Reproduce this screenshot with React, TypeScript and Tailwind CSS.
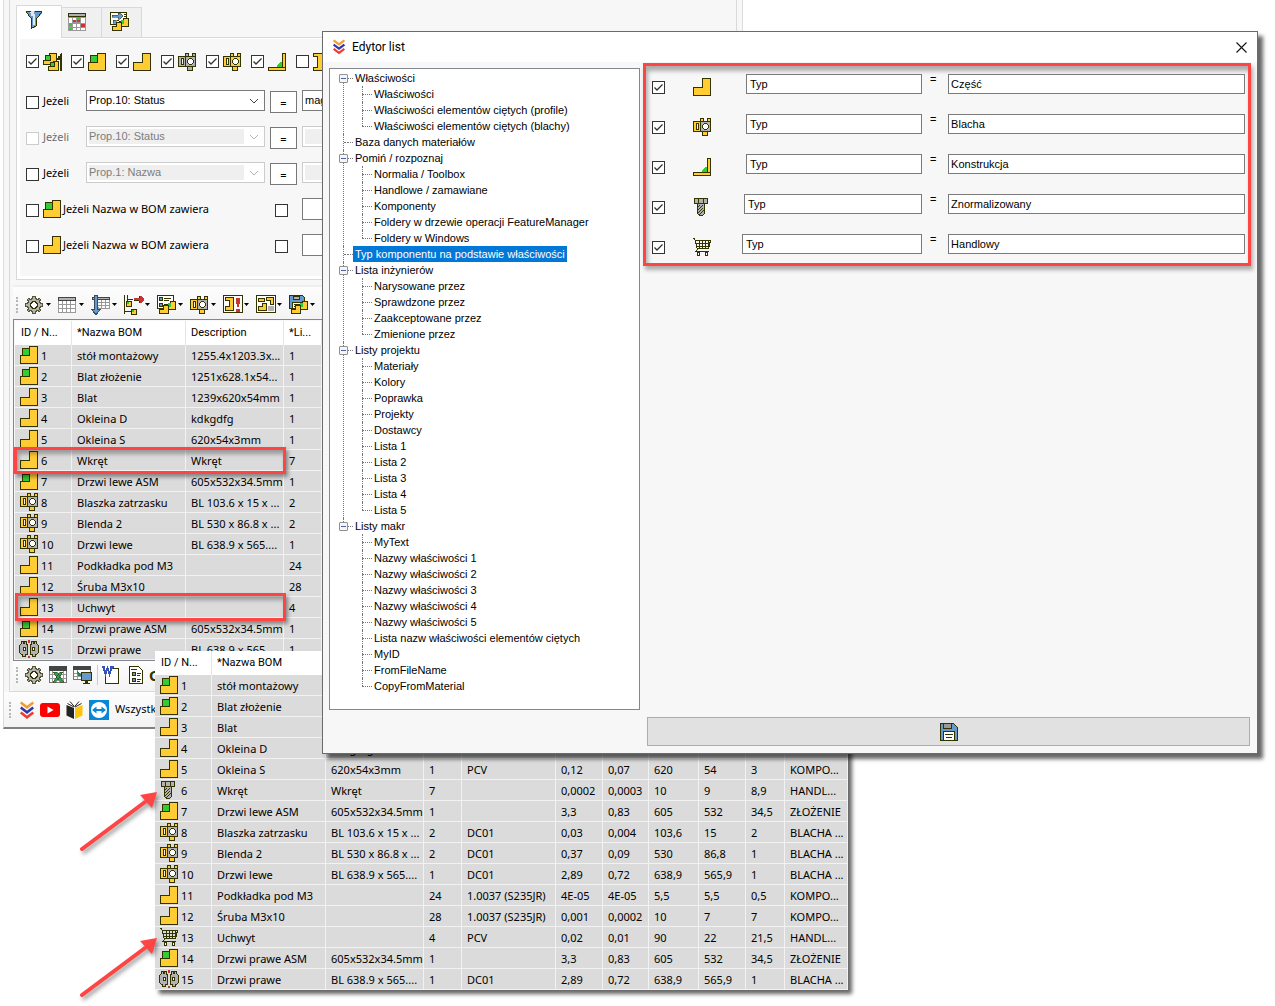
import React, { useState } from "react";

const Y = "#ffcc33";
const K = "#333300";
const G = "#33cc33";
const A = "#b2b2b2";
const B = "#6699cc";
const R = "#cc3333";

type IconProps = { children: React.ReactNode; w?: number; h?: number; smooth?: boolean };

function Icon({ children, w = 18, h = 18, smooth = false }: IconProps) {
  return (
    <svg
      width={w}
      height={h}
      viewBox={`0 0 ${w} ${h}`}
      shapeRendering={smooth ? "auto" : "crispEdges"}
      className="block shrink-0"
      fill="none"
      aria-hidden="true"
    >
      {children}
    </svg>
  );
}

const PartIcon = () => (
  <Icon>
    <path d="M9.5 .5H17.5V17.5H.5V9.5H9.5Z" fill={Y} stroke={K} />
  </Icon>
);

const AssemblyIcon = () => (
  <Icon>
    <path d="M9.5 .5H17.5V17.5H.5V9.5H9.5Z" fill={Y} stroke={K} />
    <path d="M2.5 2.5H9.5V9.5H2.5Z" fill={G} stroke={K} />
  </Icon>
);

function SheetIcon({ left = Y, plate = A, tabs = Y }: { left?: string; plate?: string; tabs?: string }) {
  return (
    <Icon>
      <path d="M7.5 .5H10.5V4.5H7.5ZM14.5 .5H17.5V4.5H14.5ZM9.5 12.5H14.5V17.5H9.5Z" fill={tabs} stroke={K} />
      <path d="M.5 3.5H7.5V13.5H.5Z" fill={left} stroke={K} />
      <path d="M3.5 5.5H5.5V11.5H3.5Z" fill="#f2f2f2" stroke={K} />
      <path d="M7.5 3.5H17.5V13.5H7.5Z" fill={plate} stroke={K} />
      <path d="M11.5 5.5H13.5L15.5 7.5V9.5L13.5 11.5H11.5L9.5 9.5V7.5Z" fill="#fff" stroke={K} />
    </Icon>
  );
}

const BracketIcon = () => (
  <Icon>
    <path d="M8.5 14.5V12.5L12.5 8.5H14.5V14.5Z" fill={G} />
    <path d="M14.5 .5H17.5V14.5H14.5Z" fill={Y} stroke={K} />
    <path d="M.5 14.5H17.5V17.5H.5Z" fill={Y} stroke={K} />
  </Icon>
);

const BeamIcon = () => (
  <Icon>
    <path d="M.5 .5H13.5V3.5H9.5V14.5H13.5V17.5H.5V14.5H4.5V3.5H.5Z" fill={Y} stroke={K} />
  </Icon>
);

const SectionIcon = () => (
  <Icon w={20}>
    <path d="M6.5 .5H13.5V11.5H.5V7.5H6.5Z" fill={Y} stroke={K} />
    <path d="M2.5 2.5H7.5V7.5H2.5Z" fill={G} stroke={K} />
    <path d="M10.5 8.5H15.5V17.5H5.5V13.5H10.5Z" fill={Y} stroke={K} />
    <path d="M7.5 9.5H11.5V13.5H7.5Z" fill={G} stroke={K} />
    <path d="M19 0V18H17V7H13V5H15V3H17V1H18V0Z" fill={K} />
  </Icon>
);

const BoltIcon = () => (
  <Icon>
    <path d="M4.5 5.5H11.5V15.5L9.5 17.5H6.5L4.5 15.5Z" fill={A} stroke={K} />
    <path d="M1.5 .5H14.5V5.5H1.5Z" fill={A} stroke={K} />
    <path d="M5.5 1V5M10.5 1V5" stroke={K} />
    <path d="M5 9L7 7M5 12L10 7M5 15L10 10M6 17L11 12" stroke={K} />
  </Icon>
);

const CartIcon = () => (
  <Icon>
    <path d="M0 .5H1.5L4.5 11.5L2.5 13.5H15.5M2 2.5H17.5L15.5 10.5H4" stroke={K} />
    <path d="M3 5.5H17M3 8.5H16M6.5 3V10M9.5 3V10M12.5 3V10M15.5 3V8" stroke={K} />
    <path d="M4.5 14.5H6.5V17.5H4.5ZM12.5 14.5H14.5V17.5H12.5Z" fill="#fff" stroke={K} />
  </Icon>
);

const MirrorIcon = () => (
  <Icon w={20}>
    <path d="M9 0H11V3H9ZM9 16H11V18H9Z" fill={R} />
    <path d="M.5 5.5L2.5 3.5V1.5H4.5V3.5H5.5V1.5H7.5V4.5H8.5V14.5H6.5V16.5H3.5V14.5H2.5L.5 12.5Z" fill={A} stroke={K} />
    <path d="M19.5 5.5L17.5 3.5V1.5H15.5V3.5H14.5V1.5H12.5V4.5H11.5V14.5H13.5V16.5H16.5V14.5H17.5L19.5 12.5Z" fill={A} stroke={K} />
    <path d="M4.5 7.5H6.5V10.5H4.5ZM13.5 7.5H15.5V10.5H13.5Z" fill="#fff" stroke={K} />
  </Icon>
);

const FunnelIcon = () => (
  <Icon w={16}>
    <path d="M0 0H16V2L11 7V15H9V17H5V7L0 2Z" fill={B} />
    <path d="M4 0H8V3H9V14H7V5H5V2H4Z" fill="#dfeaf7" />
    <path d="M0 0h5v1H0zM0 1h1v1H0zM1 2h1v1H1zM2 3h1v2H2zM3 5h1v1H3zM4 6h1v1H4zM5 7h1v11H5zM9 0h7v1H9zM15 1h1v1h-1zM14 2h1v1h-1zM13 3h1v2h-1zM12 5h1v1h-1zM11 6h1v1h-1zM10 7h1v8h-1zM8 15h2v1H8zM6 16h2v1H6z" fill={K} />
  </Icon>
);

const CalendarIcon = () => (
  <Icon>
    <path d="M0 0H18V18H0Z" fill="#999" />
    <path d="M.5 .5H17.5V3.5H.5Z" fill={A} stroke={K} />
    <path d="M1 5h3v3H1zM5 5h3v3H5zM13 5h4v3h-4zM1 8h3v2H1zM13 8h4v2h-4zM5 11h3v3H5zM9 11h3v3H9zM5 15h3v2H5zM9 15h3v2H9zM13 15h4v2h-4z" fill="#fff" />
    <path d="M9 4h3v3H9zM1 10h3v3H1zM1 15h3v2H1z" fill={G} />
    <path d="M5 7h3v2H5zM9 7h3v2H9zM13 11h4v3h-4z" fill={R} />
  </Icon>
);

const SmallParts = () => (
  <g transform="translate(2 6)">
    <path d="M11.5 .5H16.5V8.5H7.5V3.5H11.5Z" fill={Y} stroke={K} />
    <path d="M8.5 1.5H11.5V5.5H8.5Z" fill={G} />
    <path d="M4.5 4.5H9.5V12.5H.5V8.5H4.5Z" fill={Y} stroke={K} />
  </g>
);

const TransferIcon = () => (
  <Icon w={20} h={19}>
    <path d="M.5 .5H16.5V12.5H.5Z" fill="#fff" stroke={K} />
    <path d="M2 3h6V1h2l3 3-3 3H8V5H2zM3 8h3v3H3z" fill={B} stroke={K} strokeWidth=".5" />
    <path d="M14 2.5H16M14 4.5H16M7 8.5H9" stroke={K} />
    <SmallParts />
  </Icon>
);

const GearIcon = () => (
  <Icon>
    <path
      d="M7.5 .5H10.5V2.5L12.5 3.5L14.5 2.5L15.5 3.5L14.5 5.5L15.5 7.5H17.5V10.5H15.5L14.5 12.5L15.5 14.5L14.5 15.5L12.5 14.5L10.5 15.5V17.5H7.5V15.5L5.5 14.5L3.5 15.5L2.5 14.5L3.5 12.5L2.5 10.5H.5V7.5H2.5L3.5 5.5L2.5 3.5L3.5 2.5L5.5 3.5L7.5 2.5Z"
      fill={A}
      stroke="#555533"
    />
    <path d="M8 5.500H10L12.500 8V10L10 12.500H8L5.500 10V8Z" fill="#fff" stroke={K} />
  </Icon>
);

const GridIcon = () => (
  <Icon>
    <path d="M.5 2.500H17.500V16.500H.5Z" fill="#fff" stroke="#999" />
    <path d="M1 8.500H17M1 12.500H17M4.500 5V16M8.500 5V16M12.500 5V16" stroke="#999" />
    <path d="M.5 1.500H17.500V4.500H.5Z" fill={A} stroke="#444" />
  </Icon>
);

const SortIcon = () => (
  <Icon w={19} h={20}>
    <path d="M1.500 2.500H18.500V13.500H8Z" fill="#fff" stroke="#999" />
    <path d="M7 7.500H18M7 10.500H18M10.500 5V13M14.500 5V13" stroke="#999" />
    <path d="M1.500 2.500H18.500V4.500H1.500Z" fill={A} stroke="#444" />
    <path d="M3.500 .5H6.500V14.500H9.500L5.500 19H4.500L.5 14.500H3.500Z" fill={B} stroke="#334d66" />
  </Icon>
);

const TreeMoveIcon = () => (
  <Icon w={20} h={20}>
    <path d="M.500 0V19M1 16.500H8M3.500 0V6M4 4.500H9" stroke={K} />
    <path d="M2.500 6.500H7.500V11.500H2.500Z" fill={Y} stroke={K} />
    <path d="M3 7h2v2H3z" fill={G} />
    <path d="M7.500 14.500H12.500V19.500H7.500Z" fill={Y} stroke={K} />
    <path d="M8 15h2v2H8z" fill={G} />
    <path d="M10 3h5V1h2l3 3v1l-3 3h-2V6h-5z" fill={R} />
    <path d="M10 5.500H15M15.500 1V3M15.500 6V8" stroke={K} />
  </Icon>
);

const ListPartsIcon = () => (
  <Icon w={20} h={19}>
    <path d="M.5 .5H16.500V13.500H.5Z" fill="#fff" stroke={K} />
    <path d="M2.500 2.500H5.500V5.500H2.500ZM2.500 8.500H5.500V11.500H2.500Z" fill={B} stroke={K} />
    <path d="M7 3.500H14M7 5.500H12M7 9.500H9" stroke={K} />
    <SmallParts />
  </Icon>
);

const FrameAlertIcon = () => (
  <Icon w={20} h={19}>
    <path d="M.5 .5H19.500V17.500H.5Z" fill="#fff" stroke={K} />
    <path d="M2.500 2.500H10.500V15.500H2.500V11.500H6.500V5.500H2.500Z" fill={Y} stroke={K} />
    <path d="M13 3h4v6h-1v3h-2V9h-1zM13 14h4v3h-4z" fill={R} />
  </Icon>
);

const FramePartsIcon = () => (
  <Icon w={20} h={19}>
    <path d="M.5 .5H19.500V17.500H.5Z" fill="#fff" stroke={K} />
    <path d="M2.500 3.500H8.500V6.500H2.500ZM6.500 8.500H10.500V15.500H2.500V11.500H6.500Z" fill={Y} stroke={K} />
    <path d="M10.500 2.500H17.500V9.500H14.500V5.500H10.500Z" fill={Y} stroke={K} />
    <path d="M12 11h6v5h-6z" fill={A} />
  </Icon>
);

const DiskPartsIcon = () => (
  <Icon w={20} h={19}>
    <path d="M.5 .5H13.500L15.500 2.500V13.500H.5Z" fill={B} stroke={K} />
    <path d="M4.500 1H10.500V4.500H4.500Z" fill={A} stroke={K} />
    <path d="M3.500 7.500H12.500V13.500H3.500Z" fill="#fff" stroke={K} />
    <path d="M5 9.500H9M5 11.500H8" stroke={K} />
    <SmallParts />
  </Icon>
);

const ExcelIcon = () => (
  <Icon>
    <path d="M.5 .5H17.500V16.500H.5Z" fill="#fff" stroke="#777" />
    <path d="M0 0H18V5H0Z" fill="#444" />
    <path d="M1 8.500H17M1 12.500H17M3.500 5V16M14.500 5V16" stroke="#999" />
    <path d="M4 6H8L15 16H11ZM11 6H14L7 16H4Z" fill="#2f9d5f" stroke={K} strokeWidth=".5" />
  </Icon>
);

const ScreenIcon = () => (
  <Icon w={20}>
    <path d="M.5 .5H17.500V13.500H.5Z" fill="#fff" stroke="#777" />
    <path d="M0 0H18V4H0Z" fill="#444" />
    <path d="M1 7.500H10M1 10.500H10M4.500 4V13" stroke="#999" />
    <path d="M4 5l5 5H5z" fill="#2f7d4f" />
    <path d="M8.500 6.500H18.500V14.500H8.500Z" fill={B} stroke={K} />
    <path d="M12 15h3v2h2v1h-7v-1h2z" fill={K} />
  </Icon>
);

const WordIcon = () => (
  <Icon w={17}>
    <path d="M3.500 2.500H16.500V17.500H3.500Z" fill="#fff" stroke={K} />
    <path d="M0 0H11V9H0Z" fill="#fff" />
    <path d="M0 1H3M1.500 1L3.500 8L5.500 2L7.500 8L10 1M8 1H12" stroke="#3355bb" strokeWidth="2" />
  </Icon>
);

const DocIcon = () => (
  <Icon w={14}>
    <path d="M.5 .5H9.500L13.500 4.500V17.500H.5Z" fill="#fff" stroke={K} />
    <path d="M3.500 6.500H6.500V9.500H3.500ZM3.500 12.500H6.500V15.500H3.500Z" fill={B} stroke={K} />
    <path d="M2 3.500H8M8 7.500H12M8 9.500H11M8 13.500H12M8 15.500H11" stroke={K} />
  </Icon>
);

const ChevronsIcon = ({ size }: { size: number }) => (
  <svg width={size} height={(size * 18) / 14} viewBox="0 0 14 18" fill="none" strokeWidth="2.600" className="block shrink-0" aria-hidden="true">
    <path d="M.7 1.500L7 6.300L13.300 1.500" stroke="#f79a32" />
    <path d="M.7 6.500L7 11.300L13.300 6.500" stroke="#2f38a8" />
    <path d="M.7 11.500L7 16.300L13.300 11.500" stroke="#f03a2e" />
  </svg>
);

const VideoIcon = () => (
  <Icon w={20} h={14} smooth>
    <rect width="20" height="14" rx="3" fill="#f00" />
    <path d="M7.500 3.500L13.500 7L7.500 10.500Z" fill="#fff" />
  </Icon>
);

const BookIcon = () => (
  <Icon w={17} h={18} smooth>
    <path d="M.5 4L8 7V18L.5 14.500Z" fill="#222" />
    <path d="M16.500 4L9 7V18L16.500 14.500Z" fill="#ffc40c" />
    <path d="M1.500 2.500L8 6M4 .5L8.300 5.500M15.500 2.500L9 6M13 .5L8.700 5.500" stroke="#222" />
  </Icon>
);

const RemoteIcon = () => (
  <Icon w={20} h={20} smooth>
    <rect width="20" height="20" fill="#0a86d6" />
    <circle cx="10" cy="10" r="8" fill="#fff" />
    <path d="M3 10L7.500 6.500V9H12.500V6.500L17 10L12.500 13.500V11H7.500V13.500Z" fill="#0a86d6" />
  </Icon>
);

const DiskIcon = () => (
  <Icon>
    <path d="M.5 .5H13.500L17.500 4.500V17.500H.5Z" fill={B} stroke={K} />
    <path d="M3.500 .5H11.500V5.500H3.500Z" fill="#999" stroke={K} />
    <path d="M3.500 8.500H14.500V17.500H3.500Z" fill="#fff" stroke={K} />
    <path d="M5 11.500H13M6 14.500H12" stroke={K} />
  </Icon>
);

function Check({ label, checked = false, disabled = false }: { label: string; checked?: boolean; disabled?: boolean }) {
  const [on, setOn] = useState(checked);
  return (
    <span className="relative mt-0.5 block size-[13px] shrink-0">
      <input
        type="checkbox"
        aria-label={label}
        checked={on}
        disabled={disabled}
        onChange={() => setOn(!on)}
        className="block size-[13px] appearance-none border border-[#333] bg-white disabled:border-[#ccc]"
      />
      {on && (
        <svg width="13" height="13" viewBox="0 0 13 13" fill="none" className="pointer-events-none absolute inset-0" aria-hidden="true">
          <path d="M2.500 6.500L5 9L10.500 3.500" stroke="#333" strokeWidth="1.300" />
        </svg>
      )}
    </span>
  );
}

function Grip() {
  return <span className="h-4 w-0.5 shrink-0 border-l-2 border-dotted border-[#b5b5b5]" />;
}

type Row = { icon: React.ReactNode; cells: string[] };

const part = <PartIcon />;
const assembly = <AssemblyIcon />;
const sheet = <SheetIcon />;

const rows: Row[] = [
  { icon: assembly, cells: ["stół montażowy", "1255.4x1203.3x...", "1"] },
  { icon: assembly, cells: ["Blat złożenie", "1251x628.1x54...", "1"] },
  { icon: part, cells: ["Blat", "1239x620x54mm", "1"] },
  { icon: part, cells: ["Okleina D", "kdkgdfg", "1"] },
  { icon: part, cells: ["Okleina S", "620x54x3mm", "1", "PCV", "0,12", "0,07", "620", "54", "3", "KOMPO..."] },
  { icon: part, cells: ["Wkręt", "Wkręt", "7", "", "0,0002", "0,0003", "10", "9", "8,9", "HANDL..."] },
  { icon: assembly, cells: ["Drzwi lewe ASM", "605x532x34.5mm", "1", "", "3,3", "0,83", "605", "532", "34,5", "ZŁOŻENIE"] },
  { icon: sheet, cells: ["Blaszka zatrzasku", "BL 103.6 x 15 x ...", "2", "DC01", "0,03", "0,004", "103,6", "15", "2", "BLACHA ..."] },
  { icon: sheet, cells: ["Blenda 2", "BL 530 x 86.8 x ...", "2", "DC01", "0,37", "0,09", "530", "86,8", "1", "BLACHA ..."] },
  { icon: sheet, cells: ["Drzwi lewe", "BL 638.9 x 565....", "1", "DC01", "2,89", "0,72", "638,9", "565,9", "1", "BLACHA ..."] },
  { icon: part, cells: ["Podkładka pod M3", "", "24", "1.0037 (S235JR)", "4E-05", "4E-05", "5,5", "5,5", "0,5", "KOMPO..."] },
  { icon: part, cells: ["Śruba M3x10", "", "28", "1.0037 (S235JR)", "0,001", "0,0002", "10", "7", "7", "KOMPO..."] },
  { icon: part, cells: ["Uchwyt", "", "4", "PCV", "0,02", "0,01", "90", "22", "21,5", "HANDL..."] },
  { icon: assembly, cells: ["Drzwi prawe ASM", "605x532x34.5mm", "1", "", "3,3", "0,83", "605", "532", "34,5", "ZŁOŻENIE"] },
  { icon: <MirrorIcon />, cells: ["Drzwi prawe", "BL 638.9 x 565....", "1", "DC01", "2,89", "0,72", "638,9", "565,9", "1", "BLACHA ..."] },
];

const resultIcons: Record<string, React.ReactNode> = { Wkręt: <BoltIcon />, Uchwyt: <CartIcon /> };

const resultRows: Row[] = rows.map((row, i) => ({
  icon: resultIcons[row.cells[0]] ?? row.icon,
  cells: i < 3 ? row.cells.slice(0, 1) : row.cells,
}));

const columnWidths = [
  "w-[57px]",
  "w-[114px]",
  "w-[98px]",
  "w-[38px]",
  "w-[94px]",
  "w-[47px]",
  "w-[46px]",
  "w-[50px]",
  "w-[47px]",
  "w-[39px]",
  "w-[63px]",
];

function BomTable({ count, titles, data }: { count: number; titles: string[]; data: Row[] }) {
  const cols = columnWidths.slice(0, count);
  return (
    <table className="w-0 table-fixed border-separate border-spacing-0 bg-[#dbdbdb] text-[11px] leading-4 whitespace-nowrap">
      <colgroup>
        {cols.map((width, i) => (
          <col key={i} className={width} />
        ))}
      </colgroup>
      <thead>
        <tr className="h-6">
          {cols.map((_, i) => (
            <th key={i} className="border-r border-[#e5e5e5] bg-white p-0 pl-[5px] text-left font-[Roboto] font-normal first:pl-1.5">
              {titles[i]}
            </th>
          ))}
        </tr>
      </thead>
      <tbody>
        {data.map((row, r) => (
          <tr key={r} className="h-[21px]">
            <td className="border-r border-b border-[#f2f2f2] p-0">
              <span className="flex h-5 items-center">
                <span className="flex w-[26px] justify-center pr-0.5 pl-1">{row.icon}</span>
                <span className="pt-px">{r + 1}</span>
              </span>
            </td>
            {cols.slice(1).map((_, i) => (
              <td key={i} className="border-r border-b border-[#f2f2f2] p-0 pt-0.5 pl-[5px]">
                {row.cells[i]}
              </td>
            ))}
          </tr>
        ))}
      </tbody>
    </table>
  );
}

const typeFilters = [
  { name: "Złożenie główne", icon: <SectionIcon />, on: true },
  { name: "Złożenie", icon: assembly, on: true },
  { name: "Część", icon: part, on: true },
  { name: "Blacha szara", icon: <SheetIcon left={A} plate={A} tabs={A} />, on: true },
  { name: "Blacha", icon: <SheetIcon left={Y} plate={Y} tabs={Y} />, on: true },
  { name: "Konstrukcja", icon: <BracketIcon />, on: true },
  { name: "Profil", icon: <BeamIcon />, on: false },
];

function ConditionRow({ prop, value, disabled = false, checkDisabled = false }: { prop: string; value: string; disabled?: boolean; checkDisabled?: boolean }) {
  return (
    <div className="flex h-[22px] items-start">
      <span className="pt-1">
        <Check label="Jeżeli" disabled={checkDisabled} />
      </span>
      <span className={checkDisabled ? "w-[47px] pt-[3px] pl-1 text-[#6d6d6d]" : "w-[47px] pt-[3px] pl-1"}>Jeżeli</span>
      <div className={disabled ? "flex h-[21px] w-[179px] border border-[#ccc] bg-white p-0.5" : "flex h-[21px] w-[179px] border border-[#7a7a7a] bg-white p-0.5"}>
        <select
          aria-label="Właściwość"
          disabled={disabled}
          className="min-w-0 flex-1 appearance-none bg-white font-[Liberation_Sans] text-[11px] leading-[15px] disabled:bg-[#efefef] disabled:text-[#7d7d7d]"
        >
          <option>{prop}</option>
        </select>
        <svg width="18" height="15" viewBox="0 0 18 15" fill="none" className="pointer-events-none" aria-hidden="true">
          <path d="M6 6L10 10L14 6" stroke={disabled ? "#b5b5b5" : "#444"} />
        </svg>
      </div>
      <button type="button" className="mt-px ml-[5px] h-[22px] w-[27px] border border-[#777] bg-white leading-none">
        =
      </button>
      <div className={disabled ? "ml-[5px] flex h-[21px] flex-1 border border-[#ccc] bg-white p-0.5" : "ml-[5px] flex h-[21px] flex-1 border border-[#7a7a7a] bg-white p-0.5"}>
        <input
          aria-label="Wartość"
          defaultValue={value}
          disabled={disabled}
          className="w-full min-w-0 font-[Liberation_Sans] text-[11px] disabled:bg-[#efefef]"
        />
      </div>
    </div>
  );
}

function NameRow({ icon }: { icon: React.ReactNode }) {
  return (
    <div className="flex h-[22px] items-center">
      <Check label="Jeżeli Nazwa w BOM zawiera" />
      <span className="ml-1">{icon}</span>
      <span className="w-[214px] pl-0.5">Jeżeli Nazwa w BOM zawiera</span>
      <Check label="Wyklucz" />
      <input aria-label="Nazwa" className="ml-3.5 h-[22px] min-w-0 flex-1 border border-[#7a7a7a] bg-white" />
    </div>
  );
}

const tools = [
  { name: "Ustawienia", icon: <GearIcon /> },
  { name: "Tabela", icon: <GridIcon /> },
  { name: "Sortowanie", icon: <SortIcon /> },
  { name: "Przenieś", icon: <TreeMoveIcon /> },
  { name: "Lista części", icon: <ListPartsIcon /> },
  { name: "Blachy", icon: sheet },
  { name: "Błędy", icon: <FrameAlertIcon /> },
  { name: "Układ", icon: <FramePartsIcon /> },
  { name: "Zapisz", icon: <DiskPartsIcon /> },
];

function MainWindow() {
  return (
    <section className="absolute top-0 left-[3px] w-[58%] overflow-hidden border-x border-b-2 border-x-[#dcdcdc] border-b-[#808080] bg-[#f7f7f7]">
      <div className="mx-[5px] border-x border-b border-[#d9d9d9]">
        <div className="ml-1.5 flex items-end pt-[5px]">
          <button type="button" aria-label="Filtr" className="-mb-px flex h-[33px] w-[46px] justify-center border border-b-0 border-[#d9d9d9] bg-white pt-[5px] pr-2.5">
            <FunnelIcon />
          </button>
          <button type="button" aria-label="Kalendarz" className="flex h-[30px] w-10 justify-center border-t border-r border-[#d9d9d9] bg-[#f0f0f0] pt-[5px] pr-2.5">
            <CalendarIcon />
          </button>
          <button type="button" aria-label="Właściwości części" className="flex h-[30px] w-10 justify-center border-t border-r border-[#d9d9d9] bg-[#f0f0f0] pt-1 pr-1">
            <TransferIcon />
          </button>
        </div>
        <div className="mx-1.5 border border-[#d9d9d9] bg-white p-[3px] pt-px">
          <div className="flex flex-col gap-3.5 bg-[#f7f7f7] px-1.5 pt-3.5 pb-5 text-[11px]">
            <div className="mb-[5px] flex gap-2.5">
              {typeFilters.map((t) => (
                <div key={t.name} className="flex w-[35px] gap-1">
                  <Check label={t.name} checked={t.on} />
                  {t.icon}
                </div>
              ))}
            </div>
            <ConditionRow prop="Prop.10: Status" value="magazyn" />
            <ConditionRow prop="Prop.10: Status" value="" disabled checkDisabled />
            <ConditionRow prop="Prop.1: Nazwa" value="" disabled />
            <NameRow icon={assembly} />
            <NameRow icon={part} />
          </div>
        </div>
        <div className="mt-[5px] ml-[3px] border-t-2 border-[#efefef]">
          <div className="flex h-8 items-center bg-gradient-to-b from-[#fdfdfd] to-[#f3f3f3] pt-[3px] pl-[3px]">
            <Grip />
            <div className="ml-[7px] flex">
              {tools.map((t) => (
                <button key={t.name} type="button" aria-label={t.name} className="flex w-[33px] items-center gap-px">
                  <span className="flex w-5">{t.icon}</span>
                  <svg width="7" height="4" viewBox="0 0 7 4" className="shrink-0" aria-hidden="true">
                    <path d="M0 0H5L2.500 3Z" fill="#000" />
                  </svg>
                </button>
              ))}
            </div>
          </div>
          <div className="overflow-hidden border-y border-l border-[#828790] pt-px pl-px">
            <BomTable count={4} titles={["ID / N...", "*Nazwa BOM", "Description", "*Li..."]} data={rows} />
          </div>
          <div className="flex h-[30px] items-center bg-gradient-to-b from-[#fdfdfd] to-[#f3f3f3] pb-[3px] pl-[3px]">
            <Grip />
            <div className="ml-[7px] flex items-center gap-1.5">
              <button type="button" aria-label="Ustawienia eksportu"><GearIcon /></button>
              <button type="button" aria-label="Eksport do Excela"><ExcelIcon /></button>
              <button type="button" aria-label="Podgląd"><ScreenIcon /></button>
              <span className="-mx-0.5 h-5 w-px bg-[#ccc]" />
              <button type="button" aria-label="Eksport do Worda"><WordIcon /></button>
              <button type="button" aria-label="Raport" className="ml-1"><DocIcon /></button>
              <span className="text-[15px] leading-4 font-bold text-[#333300]">O</span>
            </div>
          </div>
        </div>
      </div>
      <div className="flex h-[35px] items-center bg-gradient-to-b from-[#fdfdfd] to-[#f3f3f3] pl-[5px] text-[11px]">
        <Grip />
        <div className="ml-[9px] flex items-center gap-1.5">
          <a href="#start" aria-label="Start"><ChevronsIcon size={14} /></a>
          <a href="#video" aria-label="Wideo"><VideoIcon /></a>
          <a href="#help" aria-label="Pomoc"><BookIcon /></a>
          <a href="#remote" aria-label="Pomoc zdalna"><RemoteIcon /></a>
          <span>Wszystkie</span>
        </div>
      </div>
      <span className="pointer-events-none absolute top-[447px] left-[10px] h-[27px] w-[272px] border-[3px] border-[#ff4444] shadow-[2px_3px_4px_rgba(0,0,0,.4),inset_2px_4px_4px_rgba(0,0,0,.3)]" />
      <span className="pointer-events-none absolute top-[593px] left-[11px] h-7 w-[271px] border-[3px] border-[#ff4444] shadow-[2px_3px_4px_rgba(0,0,0,.4),inset_2px_4px_4px_rgba(0,0,0,.3)]" />
    </section>
  );
}

type Node = { label: string; children?: string[]; selected?: boolean };

const tree: Node[] = [
  { label: "Właściwości", children: ["Właściwości", "Właściwości elementów ciętych (profile)", "Właściwości elementów ciętych (blachy)"] },
  { label: "Baza danych materiałów" },
  { label: "Pomiń / rozpoznaj", children: ["Normalia / Toolbox", "Handlowe / zamawiane", "Komponenty", "Foldery w drzewie operacji FeatureManager", "Foldery w Windows"] },
  { label: "Typ komponentu na podstawie właściwości", selected: true },
  { label: "Lista inżynierów", children: ["Narysowane przez", "Sprawdzone przez", "Zaakceptowane przez", "Zmienione przez"] },
  { label: "Listy projektu", children: ["Materiały", "Kolory", "Poprawka", "Projekty", "Dostawcy", "Lista 1", "Lista 2", "Lista 3", "Lista 4", "Lista 5"] },
  { label: "Listy makr", children: ["MyText", "Nazwy właściwości 1", "Nazwy właściwości 2", "Nazwy właściwości 3", "Nazwy właściwości 4", "Nazwy właściwości 5", "Lista nazw właściwości elementów ciętych", "MyID", "FromFileName", "CopyFromMaterial"] },
];

function TreeView() {
  return (
    <ul className="mt-[5px] mb-9 w-[311px] shrink-0 border border-[#828790] bg-white pt-px pb-[15px] pl-[9px] font-[Liberation_Sans] text-[11px] leading-4">
      {tree.map((node) => (
        <li
          key={node.label}
          className="relative before:absolute before:top-0 before:left-1 before:h-full before:border-l before:border-dotted before:border-[#777] first:before:top-2 last:before:h-2"
        >
          <div className="relative flex h-4 items-center">
            {node.children ? (
              <button type="button" aria-label={`Zwiń ${node.label}`} className="flex size-[9px] items-center justify-center rounded-[1px] border border-[#919191] bg-[#f5f5f5]">
                <span className="h-px w-[5px] bg-[#4b63a7]" />
              </button>
            ) : (
              <span className="ml-[5px] w-1 border-t border-dotted border-[#777]" />
            )}
            <span className="w-[5px] border-t border-dotted border-[#777]" />
            <span className={node.selected ? "bg-[#0078d7] px-0.5 text-white" : "px-0.5"}>{node.label}</span>
          </div>
          {node.children && (
            <ul className="pl-[23px]">
              {node.children.map((c) => (
                <li
                  key={c}
                  className="relative flex h-4 items-center before:absolute before:top-0 before:left-0 before:h-full before:border-l before:border-dotted before:border-[#777] last:before:h-2"
                >
                  <span className="w-2.5 border-t border-dotted border-[#777]" />
                  <span className="px-0.5">{c}</span>
                </li>
              ))}
            </ul>
          )}
        </li>
      ))}
    </ul>
  );
}

const mappings = [
  { icon: part, value: "Część", lead: "flex w-[94px] shrink-0 pt-1" },
  { icon: sheet, value: "Blacha", lead: "flex w-[94px] shrink-0 pt-1" },
  { icon: <BracketIcon />, value: "Konstrukcja", lead: "flex w-[94px] shrink-0 pt-1" },
  { icon: <BoltIcon />, value: "Znormalizowany", lead: "flex w-[92px] shrink-0 pt-1" },
  { icon: <CartIcon />, value: "Handlowy", lead: "flex w-[90px] shrink-0 pt-1" },
];

function ListEditor() {
  return (
    <section
      role="dialog"
      aria-label="Edytor list"
      className="absolute top-[31px] right-[17px] left-[322px] border border-[#6b6b6b] bg-[#f7f7f7] shadow-[5px_5px_4px_rgba(0,0,0,.6)]"
    >
      <header className="flex h-[30px] items-center bg-white px-2.5 font-[Roboto] text-[12px]">
        <ChevronsIcon size={12} />
        <h1 className="ml-[7px] flex-1">Edytor list</h1>
        <button type="button" aria-label="Zamknij">
          <svg width="11" height="11" viewBox="0 0 11 11" fill="none" aria-hidden="true">
            <path d="M.5 .5L10.500 10.500M10.500 .5L.5 10.500" stroke="#111" strokeWidth="1.100" />
          </svg>
        </button>
      </header>
      <div className="flex gap-[3px] px-1.5 pt-px pb-[7px]">
        <TreeView />
        <div className="flex min-w-0 flex-1 flex-col justify-between">
          <fieldset className="flex min-w-0 flex-col gap-[18px] border-[3px] border-[#ff4444] pt-2 pr-[3px] pb-[7px] pl-1.5 font-[Liberation_Sans] text-[11px] shadow-[2px_4px_4px_rgba(0,0,0,.3),inset_2px_5px_4px_rgba(0,0,0,.3)]">
            {mappings.map((m) => (
              <div key={m.value} className="flex h-[22px] items-start">
                <div className="flex min-w-0 flex-[273]">
                  <div className={m.lead}>
                    <span className="w-[41px] pt-px">
                      <Check label={m.value} checked />
                    </span>
                    {m.icon}
                  </div>
                  <input aria-label={`Właściwość: ${m.value}`} defaultValue="Typ" className="h-5 min-w-0 flex-1 border border-[#7a7a7a] bg-white pr-0.5 pb-px pl-[3px]" />
                </div>
                <span className="w-[26px] shrink-0 pr-1 text-center leading-[10px]">=</span>
                <input aria-label={`Wartość: ${m.value}`} defaultValue={m.value} className="h-5 min-w-0 flex-[294] border border-[#7a7a7a] bg-white pr-0.5 pb-px pl-0.5" />
              </div>
            ))}
          </fieldset>
          <button type="button" aria-label="Zapisz" className="mr-px ml-1 flex h-[29px] items-center justify-center border border-[#adadad] bg-[#e1e1e1]">
            <DiskIcon />
          </button>
        </div>
      </div>
    </section>
  );
}

function Arrow() {
  return (
    <svg width="86" height="68" viewBox="0 0 86 68" fill="#ff4444" className="block overflow-visible [filter:drop-shadow(2px_3px_2px_rgba(0,0,0,.4))]" aria-hidden="true">
      <path d="M4 59L67 12" stroke="#ff4444" strokeWidth="4" strokeLinecap="round" />
      <path d="M79 2L62 5L74 18Z" />
    </svg>
  );
}

export default function App() {
  return (
    <main className="relative min-h-screen overflow-hidden bg-white font-[Noto_Sans,sans-serif] text-black">
      <MainWindow />
      <section className="absolute top-[651px] left-[155px] shadow-[4px_4px_4px_rgba(0,0,0,.6)]">
        <BomTable count={11} titles={["ID / N...", "*Nazwa BOM"]} data={resultRows} />
      </section>
      <ListEditor />
      <div className="pointer-events-none absolute top-[790px] left-[78px]">
        <Arrow />
      </div>
      <div className="pointer-events-none absolute top-[936px] left-[78px]">
        <Arrow />
      </div>
    </main>
  );
}
